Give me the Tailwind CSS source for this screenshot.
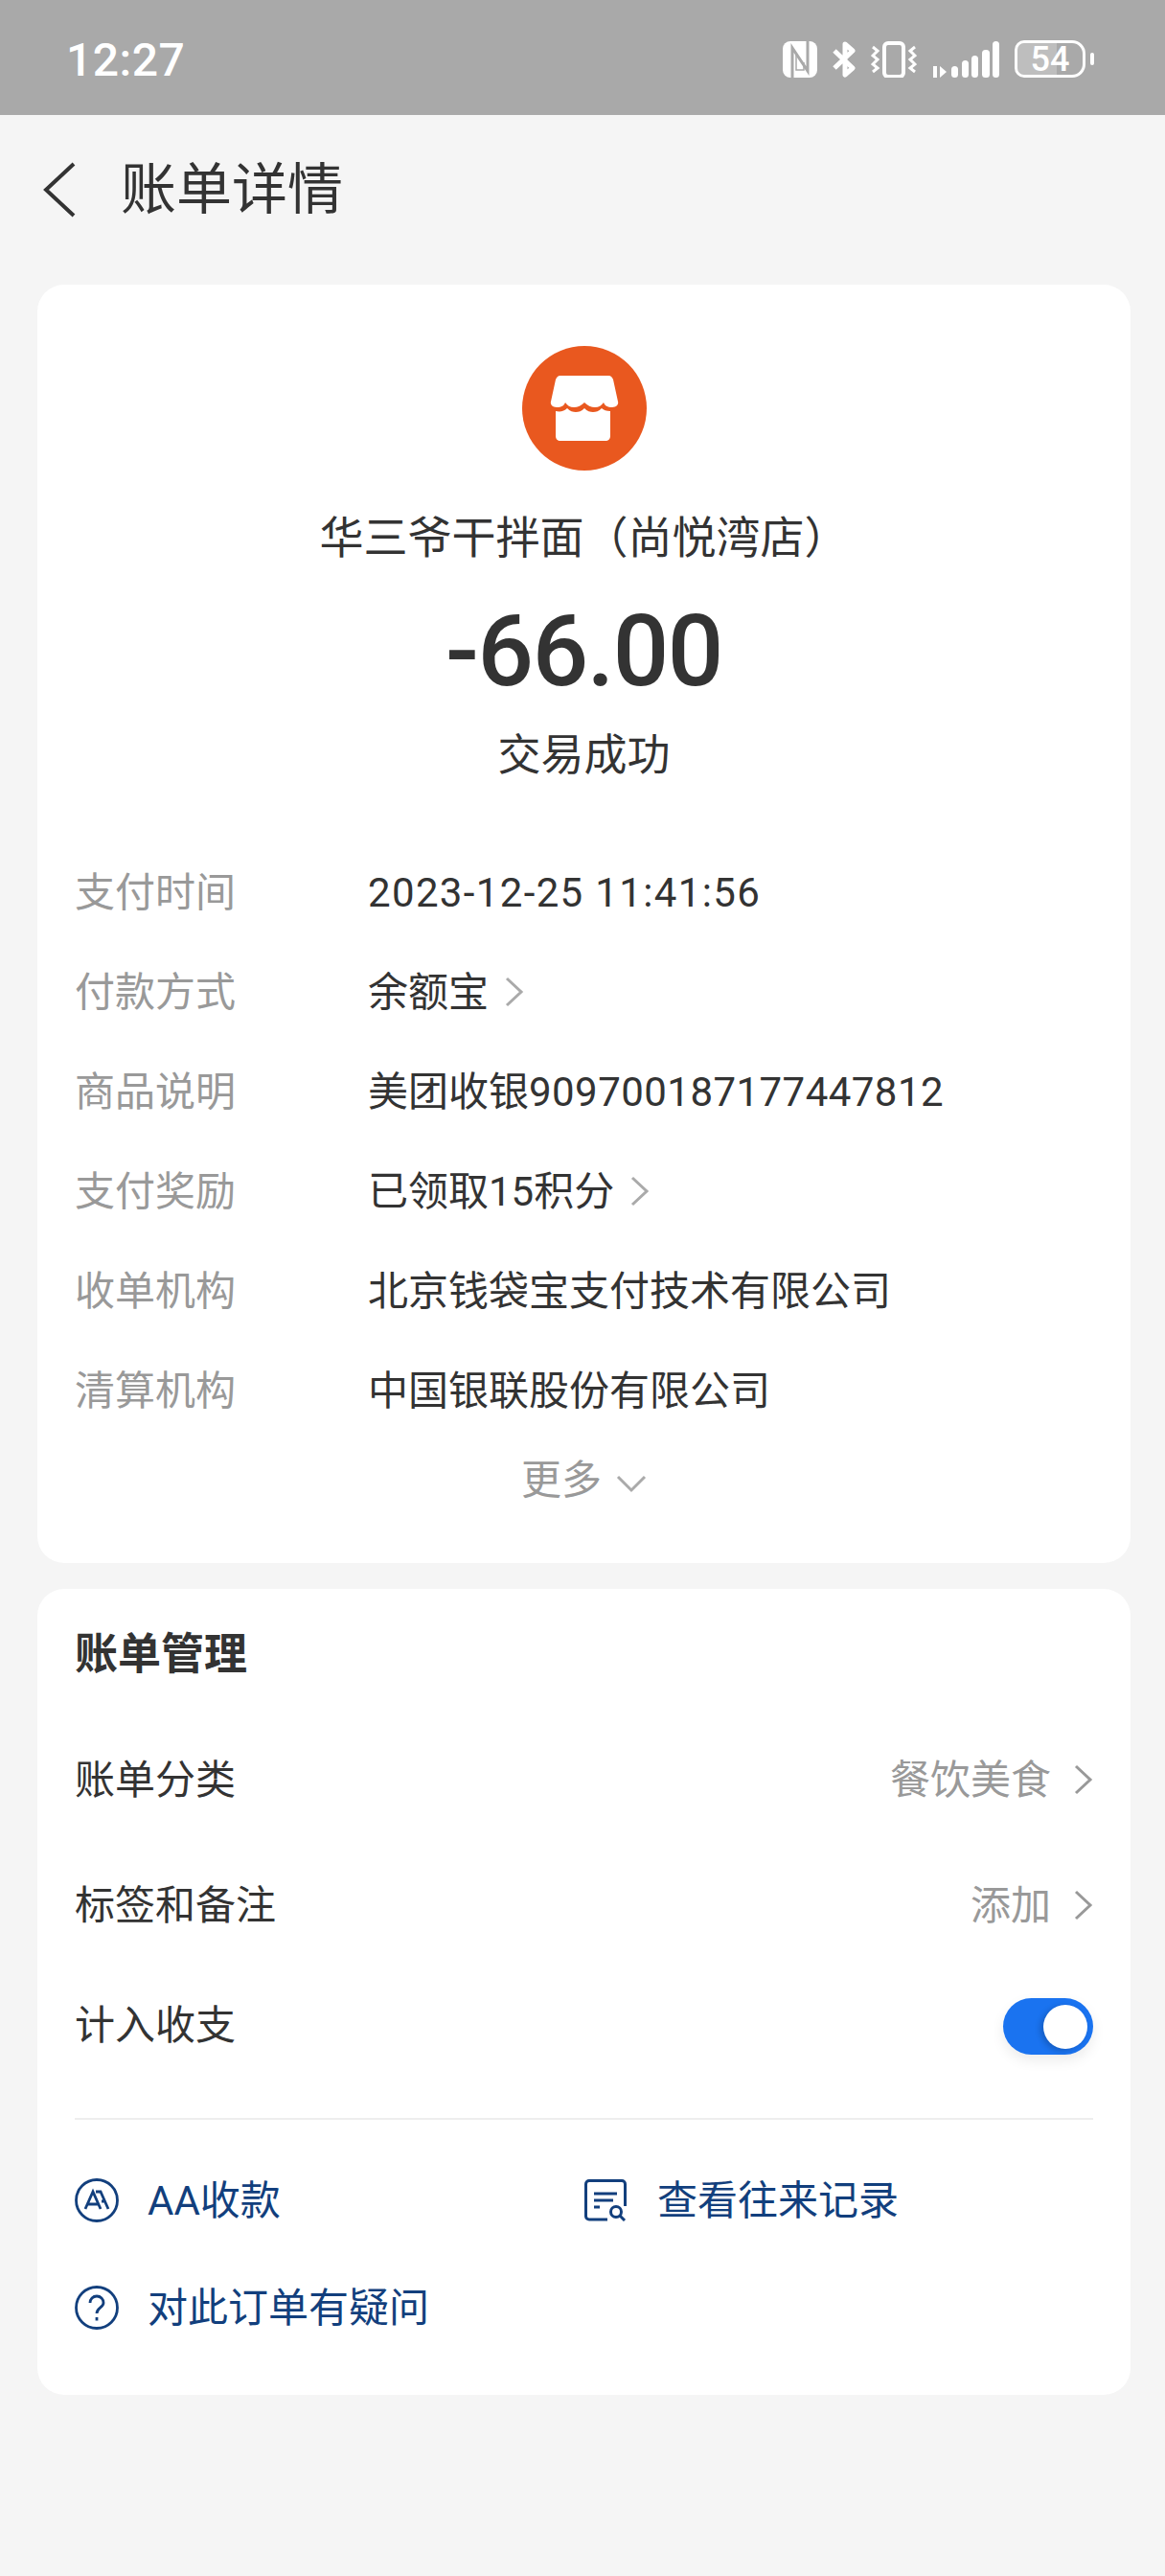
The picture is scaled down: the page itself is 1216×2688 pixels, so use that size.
<!DOCTYPE html>
<html lang="zh-CN">
<head>
    <meta charset="UTF-8">
    <meta name="viewport" content="width=device-width, initial-scale=1.0">
    <title>账单详情</title>
    <script src="https://cdn.jsdelivr.net/npm/@tailwindcss/browser@4"></script>
</head>
<body class="bg-[#f5f5f5] text-[#333333] font-['Roboto','Noto_Sans_CJK_SC',sans-serif] w-[1216px] h-[2688px] overflow-hidden">

    <!-- status bar -->
    <div class="h-[120px] bg-[#a9a9a9] flex items-center justify-between pl-[69px] pr-[74px] text-white">
        <span class="text-[48px] font-medium leading-none tracking-[0.5px] mt-[5px]">12:27</span>
        <div class="flex items-end gap-[16px] h-[40px] mt-[2px]">
            <!-- nfc -->
            <svg width="36" height="38" viewBox="0 0 36 38" fill="none"><rect width="36" height="38" rx="8" fill="white"/><path d="M10 38V7l16 24V0" stroke="#a9a9a9" stroke-width="3"/><path d="M14 14v16l8 0V22" stroke="#a9a9a9" stroke-width="1.500"/></svg>
            <!-- bluetooth -->
            <svg width="24" height="38" viewBox="0 0 24 38" fill="none"><path d="M2 10l19 18-8 7V3l8 7L2 28" stroke="white" stroke-width="5" stroke-linejoin="round"/></svg>
            <!-- vibrate -->
            <svg width="48" height="38" viewBox="0 0 48 38" fill="none"><rect x="14" y="2" width="20" height="35" rx="4" stroke="white" stroke-width="4"/><path d="M2 6l5 4-5 5 5 4-5 5 5 4-5 4M46 6l-5 4 5 5-5 4 5 5-5 4 5 4" stroke="white" stroke-width="3"/></svg>
            <!-- signal -->
            <svg width="70" height="38" viewBox="0 0 70 38" fill="white"><rect x="1" y="26" width="4" height="12"/><path d="M8 26l7 6-7 6z"/><rect x="20" y="26" width="7" height="12" rx="3.500"/><rect x="31" y="20" width="7" height="18" rx="3.500"/><rect x="41" y="15" width="7" height="23" rx="3.500"/><rect x="52" y="9" width="8" height="29" rx="3.500"/><rect x="63" y="0" width="7" height="38" rx="3.500"/></svg>
            <!-- battery -->
            <div class="flex items-center gap-[5px]">
                <div class="relative w-[74px] h-[39px] rounded-l-[10px] rounded-r-[14px] border-[3px] border-white overflow-hidden flex items-center justify-center">
                    <div class="absolute left-0 top-0 bottom-0 w-[60%] bg-white/25"></div>
                    <span class="relative text-[36px] font-medium leading-none">54</span>
                </div>
                <div class="w-[4px] h-[13px] rounded-full bg-white"></div>
            </div>
        </div>
    </div>

    <!-- nav -->
    <div class="h-[152px] flex items-center pl-[45px] pt-[4px]">
        <svg width="34" height="58" viewBox="0 0 34 58" fill="none"><path d="M32 2L3 29l29 27" stroke="#333333" stroke-width="4"/></svg>
        <h1 class="ml-[47px] text-[58px] leading-none font-normal">账单详情</h1>
    </div>

    <div class="pl-[39px] pr-[36px] mt-[25px]">
        <!-- bill card -->
        <div class="h-[1334px] bg-white rounded-[28px] pt-[64px] flex flex-col items-center">
            <div class="w-[130px] h-[130px] rounded-full bg-[#e9581f] flex items-center justify-center">
                <svg width="72" height="70" viewBox="0 0 72 70" fill="white"><path d="M11 1h50c3 0 4 2 5 4l5 23c1 3-2 6-6 6-5 0-8-2-9-5-2 3-5 5-9 5s-8-2-11-5c-3 3-7 5-11 5s-7-2-9-5c-1 3-4 5-9 5-4 0-7-3-6-6L6 5c1-2 2-4 5-4z"/><path d="M6 38c5 1 9 0 12-3 3 3 6 4 9 4s6-1 9-4c3 3 6 4 9 4s6-1 9-4c2 2 5 3 9 3v26c0 3-2 5-5 5H11c-3 0-5-2-5-5z"/></svg>
            </div>
            <p class="mt-[40px] h-[60px] leading-[60px] text-[46px]">华三爷干拌面（尚悦湾店）</p>
            <p class="mt-[34px] h-[110px] leading-[110px] text-[103px] font-medium tracking-[-1.5px]">-66.00</p>
            <p class="mt-[24px] h-[60px] leading-[60px] text-[45px]">交易成功</p>

            <div class="mt-[60px] w-full px-[39px] text-[42px]">
                <div class="h-[104px] flex items-center"><span class="w-[306px] text-[#999999]">支付时间</span><span class="tracking-[1.35px]">2023-12-25 11:41:56</span></div>
                <div class="h-[104px] flex items-center"><span class="w-[306px] text-[#999999]">付款方式</span><span>余额宝</span>
                    <svg class="ml-[17px]" width="20" height="32" viewBox="0 0 20 32" fill="none"><path d="M2 2l15 14L2 30" stroke="#aaaaaa" stroke-width="3"/></svg>
                </div>
                <div class="h-[104px] flex items-center"><span class="w-[306px] text-[#999999]">商品说明</span><span>美团收银<span class="tracking-[0.45px]">909700187177447812</span></span></div>
                <div class="h-[104px] flex items-center"><span class="w-[306px] text-[#999999]">支付奖励</span><span>已领取15积分</span>
                    <svg class="ml-[17px]" width="20" height="32" viewBox="0 0 20 32" fill="none"><path d="M2 2l15 14L2 30" stroke="#aaaaaa" stroke-width="3"/></svg>
                </div>
                <div class="h-[104px] flex items-center"><span class="w-[306px] text-[#999999]">收单机构</span><span>北京钱袋宝支付技术有限公司</span></div>
                <div class="h-[104px] flex items-center"><span class="w-[306px] text-[#999999]">清算机构</span><span>中国银联股份有限公司</span></div>
            </div>

            <div class="mt-[11px] h-[60px] flex items-center text-[42px] text-[#999999]">
                <span>更多</span>
                <svg class="ml-[15px] mt-[8px]" width="32" height="20" viewBox="0 0 32 20" fill="none"><path d="M2 3l14 14L30 3" stroke="#aaaaaa" stroke-width="3"/></svg>
            </div>
        </div>

        <!-- manage card -->
        <div class="mt-[27px] h-[841px] bg-white rounded-[28px] px-[39px] pt-[27px] text-[42px]">
            <h2 class="h-[84px] leading-[84px] text-[45px] font-bold">账单管理</h2>
            <div class="mt-[36px] h-[104px] flex items-center justify-between">
                <span>账单分类</span>
                <div class="flex items-center text-[#999999]"><span>餐饮美食</span>
                    <svg class="ml-[24px]" width="20" height="32" viewBox="0 0 20 32" fill="none"><path d="M2 2l15 14L2 30" stroke="#999999" stroke-width="3"/></svg>
                </div>
            </div>
            <div class="mt-[27px] h-[104px] flex items-center justify-between">
                <span>标签和备注</span>
                <div class="flex items-center text-[#999999]"><span>添加</span>
                    <svg class="ml-[24px]" width="20" height="32" viewBox="0 0 20 32" fill="none"><path d="M2 2l15 14L2 30" stroke="#999999" stroke-width="3"/></svg>
                </div>
            </div>
            <div class="mt-[21px] h-[104px] flex items-center justify-between">
                <span>计入收支</span>
                <div class="mt-[3px] w-[94px] h-[59px] rounded-full bg-[#1a73f0] flex items-center justify-end pr-[6px] shadow-[0_6px_14px_rgba(0,0,0,0.08)]">
                    <div class="w-[46px] h-[46px] rounded-full bg-white shadow-[-3px_2px_6px_rgba(0,0,0,0.2)]"></div>
                </div>
            </div>
            <div class="mt-[45px] h-[2px] bg-[#eeeeee]"></div>

            <div class="mt-[44px] h-[80px] flex items-center text-[#123f7d]">
                <div class="w-[532px] flex items-center">
                    <svg width="46" height="46" viewBox="0 0 46 46" fill="none" stroke="#123f7d" stroke-width="2.800"><circle cx="23" cy="23" r="21.500"/><path d="M11 32l8-18 8 18M14 27h10M22 14h5l8 18M28 24h3"/></svg>
                    <span class="ml-[30px]">AA收款</span>
                </div>
                <div class="flex items-center">
                    <svg width="44" height="44" viewBox="0 0 44 44" fill="none" stroke="#123f7d" stroke-width="3"><path d="M24 42H5c-2 0-3.500-1.500-3.500-3.500V5C1.500 3 3 1.500 5 1.500h34c2 0 3.500 1.500 3.500 3.500v23"/><path d="M10 15h24M10 22h20M10 29h6"/><circle cx="33" cy="34" r="5.500"/><path d="M37 38l5 5"/></svg>
                    <span class="ml-[32px]">查看往来记录</span>
                </div>
            </div>
            <div class="mt-[32px] h-[80px] flex items-center text-[#123f7d]">
                <svg width="46" height="46" viewBox="0 0 46 46" fill="none" stroke="#123f7d" stroke-width="2.800"><circle cx="23" cy="23" r="21.500"/><path d="M16 18c0-4 3-7 7-7s7 3 7 7c0 5-7 5-7 11"/><path d="M23 33v3.500"/></svg>
                <span class="ml-[30px]">对此订单有疑问</span>
            </div>
        </div>
    </div>

</body>
</html>
